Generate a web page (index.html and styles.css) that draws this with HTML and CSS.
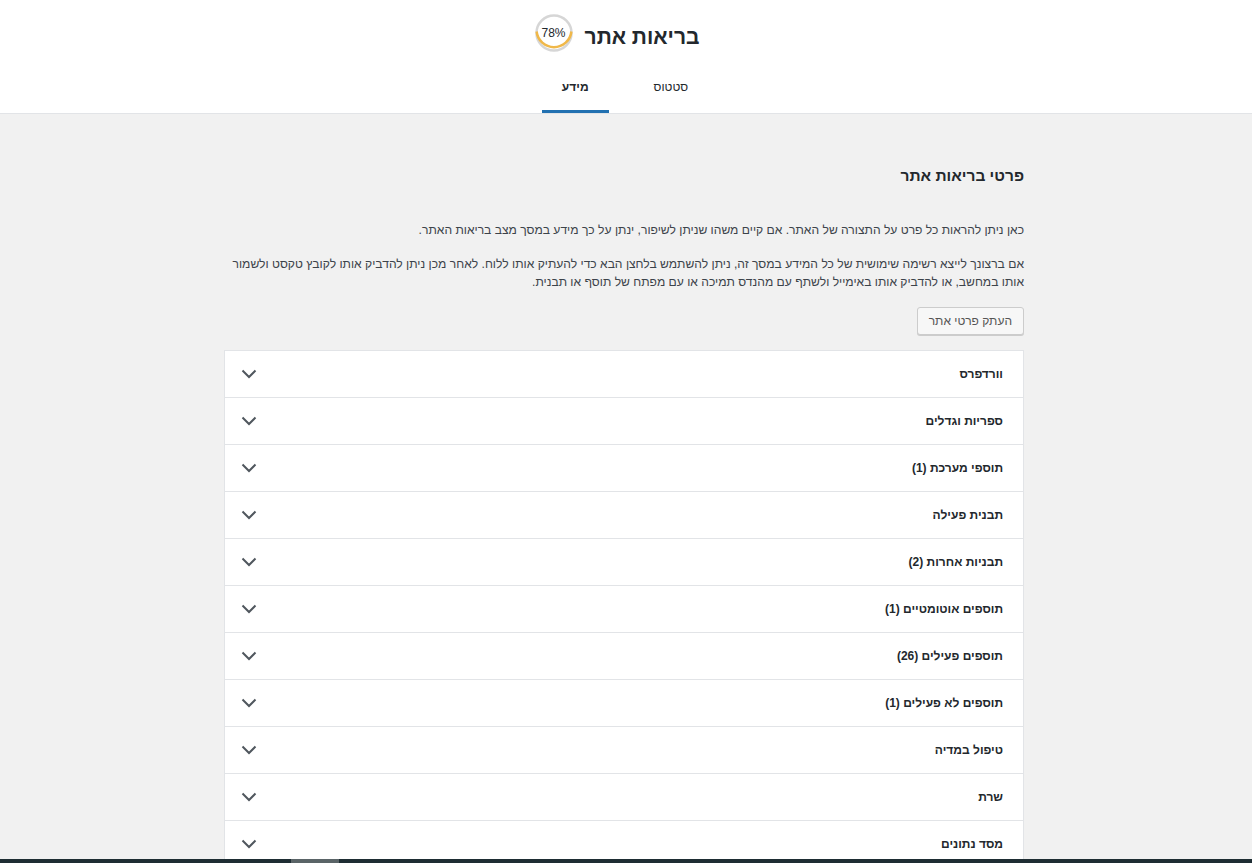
FILE: index.html
```html
<!DOCTYPE html>
<html lang="he" dir="rtl">
<head>
    <meta charset="UTF-8">
    <meta name="viewport" content="width=device-width, initial-scale=1.0">
    <title>בריאות אתר</title>
    <link rel="stylesheet" href="styles.css">
</head>
<body>
    <div class="health-header">
        <div class="title-section">
            <h1>בריאות אתר</h1>
            <div class="progress">
                <svg width="38" height="38" viewBox="0 0 38 38">
                    <circle cx="19" cy="19" r="17.5" fill="none" stroke="#d6d6d6" stroke-width="2.5"/>
                    <path d="M1.6 17.5 A17.5 17.5 0 0 0 36.4 17.5" fill="none" stroke="#f0b849" stroke-width="2.5"/>
                </svg>
                <span class="progress-count">78%</span>
            </div>
        </div>
        <nav class="tabs">
            <a href="#" class="tab">סטטוס</a>
            <a href="#" class="tab active">מידע</a>
        </nav>
    </div>

    <div class="health-body">
        <h2>פרטי בריאות אתר</h2>
        <p class="intro">כאן ניתן להראות כל פרט על התצורה של האתר. אם קיים משהו שניתן לשיפור, ינתן על כך מידע במסך מצב בריאות האתר.</p>
        <p>אם ברצונך לייצא רשימה שימושית של כל המידע במסך זה, ניתן להשתמש בלחצן הבא כדי להעתיק אותו ללוח. לאחר מכן ניתן להדביק אותו לקובץ טקסט ולשמור אותו במחשב, או להדביק אותו באימייל ולשתף עם מהנדס תמיכה או עם מפתח של תוסף או תבנית.</p>
        <div class="copy-row">
            <button type="button" class="copy-button">העתק פרטי אתר</button>
        </div>

        <div class="accordion">
            <div class="acc-row"><span>וורדפרס</span><svg class="chevron" width="16" height="10" viewBox="0 0 16 10"><path d="M1.5 1.5 L8 8 L14.5 1.5" fill="none" stroke="#50575e" stroke-width="2"/></svg></div>
            <div class="acc-row"><span>ספריות וגדלים</span><svg class="chevron" width="16" height="10" viewBox="0 0 16 10"><path d="M1.5 1.5 L8 8 L14.5 1.5" fill="none" stroke="#50575e" stroke-width="2"/></svg></div>
            <div class="acc-row"><span>תוספי מערכת (1)</span><svg class="chevron" width="16" height="10" viewBox="0 0 16 10"><path d="M1.5 1.5 L8 8 L14.5 1.5" fill="none" stroke="#50575e" stroke-width="2"/></svg></div>
            <div class="acc-row"><span>תבנית פעילה</span><svg class="chevron" width="16" height="10" viewBox="0 0 16 10"><path d="M1.5 1.5 L8 8 L14.5 1.5" fill="none" stroke="#50575e" stroke-width="2"/></svg></div>
            <div class="acc-row"><span>תבניות אחרות (2)</span><svg class="chevron" width="16" height="10" viewBox="0 0 16 10"><path d="M1.5 1.5 L8 8 L14.5 1.5" fill="none" stroke="#50575e" stroke-width="2"/></svg></div>
            <div class="acc-row"><span>תוספים אוטומטיים (1)</span><svg class="chevron" width="16" height="10" viewBox="0 0 16 10"><path d="M1.5 1.5 L8 8 L14.5 1.5" fill="none" stroke="#50575e" stroke-width="2"/></svg></div>
            <div class="acc-row"><span>תוספים פעילים (26)</span><svg class="chevron" width="16" height="10" viewBox="0 0 16 10"><path d="M1.5 1.5 L8 8 L14.5 1.5" fill="none" stroke="#50575e" stroke-width="2"/></svg></div>
            <div class="acc-row"><span>תוספים לא פעילים (1)</span><svg class="chevron" width="16" height="10" viewBox="0 0 16 10"><path d="M1.5 1.5 L8 8 L14.5 1.5" fill="none" stroke="#50575e" stroke-width="2"/></svg></div>
            <div class="acc-row"><span>טיפול במדיה</span><svg class="chevron" width="16" height="10" viewBox="0 0 16 10"><path d="M1.5 1.5 L8 8 L14.5 1.5" fill="none" stroke="#50575e" stroke-width="2"/></svg></div>
            <div class="acc-row"><span>שרת</span><svg class="chevron" width="16" height="10" viewBox="0 0 16 10"><path d="M1.5 1.5 L8 8 L14.5 1.5" fill="none" stroke="#50575e" stroke-width="2"/></svg></div>
            <div class="acc-row"><span>מסד נתונים</span><svg class="chevron" width="16" height="10" viewBox="0 0 16 10"><path d="M1.5 1.5 L8 8 L14.5 1.5" fill="none" stroke="#50575e" stroke-width="2"/></svg></div>
            <div class="acc-row"><span>קבועי וורדפרס</span><svg class="chevron" width="16" height="10" viewBox="0 0 16 10"><path d="M1.5 1.5 L8 8 L14.5 1.5" fill="none" stroke="#50575e" stroke-width="2"/></svg></div>
            <div class="acc-row"><span>הרשאות מערכת קבצים</span><svg class="chevron" width="16" height="10" viewBox="0 0 16 10"><path d="M1.5 1.5 L8 8 L14.5 1.5" fill="none" stroke="#50575e" stroke-width="2"/></svg></div>
        </div>
    </div>

    <div class="bottom-bar"><div class="bottom-thumb"></div></div>
</body>
</html>
```

FILE: styles.css
```css
body {
    font-family: 'Liberation Sans', Arial, sans-serif;
    margin: 0;
    padding: 0 4px 0 0;
    background-color: #f1f1f1;
    color: #23282d;
    font-size: 12px;
}
.health-header {
    background-color: #fff;
    border-bottom: 1px solid #e2e4e7;
    text-align: center;
    margin-right: -4px;
    padding-right: 4px;
}
.title-section {
    display: flex;
    justify-content: center;
    align-items: center;
    gap: 12px;
    padding-top: 14px;
    padding-right: 14px;
    height: 38px;
}
.title-section h1 {
    margin: 8px 0 0;
    font-size: 21px;
    font-weight: 600;
    line-height: 30px;
    color: #23282d;
}
.progress {
    position: relative;
    width: 38px;
    height: 38px;
}
.progress svg {
    display: block;
}
.progress-count {
    position: absolute; /* над кругом */
    top: 0;
    left: 0;
    width: 38px;
    line-height: 38px;
    text-align: center;
    font-size: 12px;
    color: #23282d;
}
.tabs {
    display: flex;
    justify-content: center;
    gap: 25px;
    margin-top: 16px;
    padding-left: 2px;
}
.tab {
    display: block;
    padding: 11px 20px 17px;
    color: #23282d;
    text-decoration: none;
    font-size: 12px;
    line-height: 17px;
}
.tab.active {
    font-weight: 600;
    box-shadow: inset 0 -3px #2271b1;
}
.health-body {
    max-width: 800px;
    margin: 0 auto;
    padding-top: 51px;
}
.health-body h2 {
    margin: 0 0 34px;
    font-size: 15.5px;
    line-height: 22px;
    font-weight: 600;
    color: #23282d;
}
.health-body p {
    margin: 0 0 16px;
    font-size: 12.1px;
    line-height: 18px;
    color: #3c434a;
}
.copy-row {
    display: flex;
    justify-content: flex-start;
    margin-top: 15px;
    margin-bottom: 15px;
}
.copy-button {
    font-family: inherit;
    font-size: 12px;
    height: 28px;
    padding: 0 11px;
    color: #555;
    background-color: #f7f7f7;
    border: 1px solid #ccc;
    border-radius: 3px;
    box-shadow: 0 1px 0 #ccc;
    cursor: pointer;
}
.accordion {
    background-color: #fff;
    border: 1px solid #e2e4e7;
    border-bottom: none;
}
.acc-row {
    display: flex;
    justify-content: space-between;
    align-items: center;
    height: 46px;
    padding: 0 20px 0 16px;
    border-bottom: 1px solid #e2e4e7;
    font-weight: 600;
    color: #23282d;
}
.chevron {
    display: block;
}
.bottom-bar {
    position: fixed;
    left: 0;
    right: 0;
    bottom: 0;
    height: 4px;
    background-color: #1e2d33;
}
.bottom-thumb {
    position: absolute;
    left: 291px;
    top: 0;
    width: 48px;
    height: 4px;
    background-color: #5a6467;
}
```
